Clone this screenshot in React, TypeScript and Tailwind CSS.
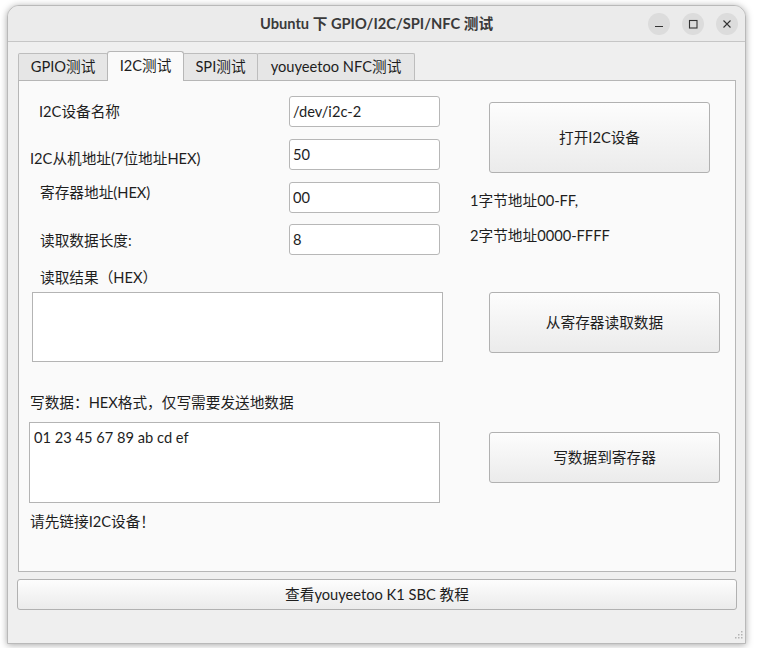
import React from "react";

function Btn({ className, children }: { className: string; children: React.ReactNode }) {
  return (
    <div
      className={
        "flex items-center justify-center rounded-[3px] border border-[#b1b1b1] bg-linear-to-b from-[#fdfdfd] to-[#ebebeb] text-[#1e1e1e] " +
        className
      }
    >
      {children}
    </div>
  );
}

function Tab({ label, selected, className }: { label: string; selected?: boolean; className: string }) {
  return selected ? (
    <div
      className={
        "relative z-10 mb-[-1px] flex h-[30px] items-center justify-center rounded-t-[3px] border border-b-0 border-[#b7b7b7] bg-[#fafafa] pb-[2px] " +
        className
      }
    >
      {label}
    </div>
  ) : (
    <div
      className={
        "flex h-[27px] items-center justify-center rounded-t-[2px] border border-b-0 border-[#bdbdbd] bg-[#e6e6e6] " +
        className
      }
    >
      {label}
    </div>
  );
}

function Input({ value }: { value: string }) {
  return (
    <input
      readOnly
      defaultValue={value}
      className="h-[31px] w-[151px] rounded-[3px] border border-[#b7b7b7] bg-white pl-[3px] text-[#1e1e1e] outline-none"
    />
  );
}

function CircleBtn({ children }: { children: React.ReactNode }) {
  return (
    <div className="flex h-[22px] w-[22px] items-center justify-center rounded-full bg-[#dcdcdc]">{children}</div>
  );
}

export default function App() {
  return (
    <div className="h-[648px] w-[757px] overflow-hidden bg-white pl-[7px] pt-[5px] font-['Lato','Noto_Sans_CJK_SC',sans-serif] text-[14.67px] leading-[20px] text-[#1e1e1e]">
      <div className="flex h-[639px] w-[739px] flex-col overflow-hidden rounded-t-[12px] border border-[#b9b9b9] bg-[#efefef] shadow-[0_1px_7px_rgba(0,0,0,0.35)]">
        {/* Title bar */}
        <div className="grid h-[36px] shrink-0 grid-cols-[1fr_auto_1fr] items-center border-b border-[#c6c6c6] bg-[#ebebeb]">
          <div />
          <div className="font-bold text-[#3a3a3a]">Ubuntu 下 GPIO/I2C/SPI/NFC 测试</div>
          <div className="flex justify-end gap-[12px] pr-[7px]">
            <CircleBtn>
              <svg width="10" height="10" viewBox="0 0 10 10">
                <line x1="1" y1="7.5" x2="9" y2="7.5" stroke="#333" strokeWidth="1.1" />
              </svg>
            </CircleBtn>
            <CircleBtn>
              <svg width="10" height="10" viewBox="0 0 10 10">
                <rect x="1.5" y="1.5" width="7.5" height="7.5" fill="none" stroke="#333" strokeWidth="1.1" />
              </svg>
            </CircleBtn>
            <CircleBtn>
              <svg width="10" height="10" viewBox="0 0 10 10">
                <path d="M1.5 1.5 L8.5 8.5 M8.5 1.5 L1.5 8.5" stroke="#333" strokeWidth="1.1" />
              </svg>
            </CircleBtn>
          </div>
        </div>

        {/* Body */}
        <div className="flex flex-col pl-[10px] pr-[9px] pt-[9px]">
          <div className="flex h-[29px] items-end">
            <Tab label="GPIO测试" className="w-[90px]" />
            <Tab label="I2C测试" selected className="ml-[-1px] w-[77px]" />
            <Tab label="SPI测试" className="ml-[-1px] w-[75px]" />
            <Tab label="youyeetoo NFC测试" className="ml-[-1px] w-[158px]" />
          </div>

          <div className="flex h-[492px] w-[718px] border border-[#b6b6b6] bg-[#fafafa]">
            {/* Left column */}
            <div className="flex w-[451px] flex-col">
              <div className="mt-[15px] flex h-[31px] items-center">
                <div className="w-[270px] pl-[20px]">I2C设备名称</div>
                <Input value="/dev/i2c-2" />
              </div>
              <div className="mt-[12px] flex h-[31px] items-center">
                <div className="w-[270px] pl-[11px] pt-[8px]">I2C从机地址(7位地址HEX)</div>
                <Input value="50" />
              </div>
              <div className="mt-[12px] flex h-[31px] items-center">
                <div className="w-[270px] pb-[10px] pl-[21px]">寄存器地址(HEX)</div>
                <Input value="00" />
              </div>
              <div className="mt-[11px] flex h-[31px] items-center">
                <div className="w-[270px] pl-[21px] pt-[3px]">读取数据长度:</div>
                <Input value="8" />
              </div>
              <div className="mt-[13px] h-[20px] pl-[21px]">读取结果（HEX）</div>
              <div className="ml-[13px] mt-[4px] h-[70px] w-[411px] border border-[#b4b4b4] bg-white" />
              <div className="mt-[31px] h-[20px] pl-[11px]">写数据：HEX格式，仅写需要发送地数据</div>
              <div className="ml-[10px] mt-[9px] h-[81px] w-[411px] border border-[#b4b4b4] bg-white pl-[4px] pt-[5px]">
                01 23 45 67 89 ab cd ef
              </div>
              <div className="mt-[9px] h-[20px] pl-[11px]">请先链接I2C设备！</div>
            </div>

            {/* Right column */}
            <div className="flex flex-col">
              <Btn className="ml-[19px] mt-[21px] h-[71px] w-[221px]">打开I2C设备</Btn>
              <div className="mt-[18px] h-[20px]">1字节地址00-FF,</div>
              <div className="mt-[15px] h-[20px]">2字节地址0000-FFFF</div>
              <Btn className="ml-[19px] mt-[46px] h-[61px] w-[231px]">从寄存器读取数据</Btn>
              <Btn className="ml-[19px] mt-[79px] h-[51px] w-[231px]">写数据到寄存器</Btn>
            </div>
          </div>

          <Btn className="ml-[-1px] mt-[7px] h-[31px] w-[720px]">查看youyeetoo K1 SBC 教程</Btn>

          <div className="mr-[-7px] mt-[21px] flex justify-end">
            <svg width="10" height="10" viewBox="0 0 10 10">
              <g fill="#b3b3b3">
                <rect x="8" y="0" width="1.5" height="1.5" />
                <rect x="5" y="3" width="1.5" height="1.5" />
                <rect x="8" y="3" width="1.5" height="1.5" />
                <rect x="2" y="6" width="1.5" height="1.5" />
                <rect x="5" y="6" width="1.5" height="1.5" />
                <rect x="8" y="6" width="1.5" height="1.5" />
              </g>
            </svg>
          </div>
        </div>
      </div>
    </div>
  );
}
